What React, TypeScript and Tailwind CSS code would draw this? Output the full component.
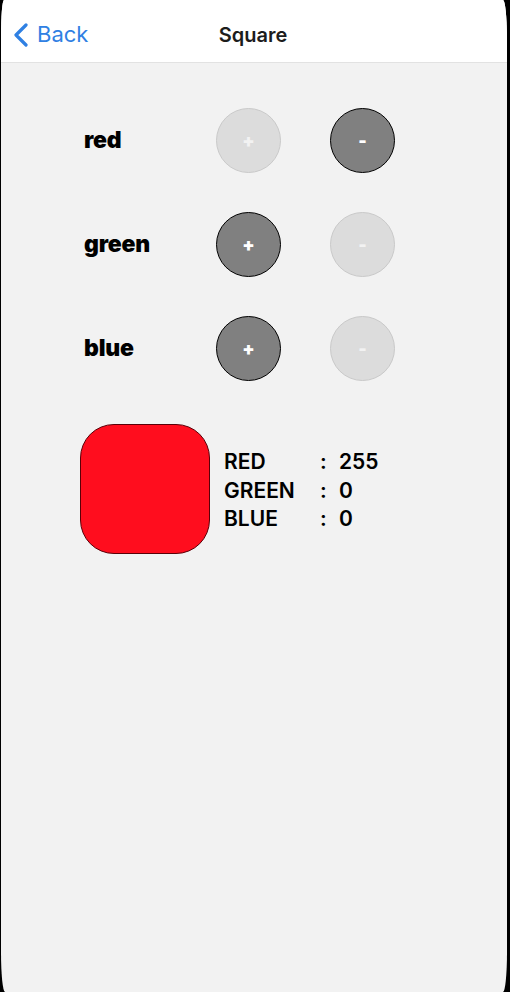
import React from "react";

function Btn({ label, enabled }: { label: string; enabled: boolean }) {
  return (
    <div
      className={
        enabled
          ? "w-[65px] h-[65px] rounded-full bg-[#808080] border-[1.5px] border-black flex items-center justify-center text-white font-black text-[18px]"
          : "w-[65px] h-[65px] rounded-full bg-[#dcdcdc] border border-[#c9c9c9] flex items-center justify-center text-[#f2f2f2] font-black text-[18px]"
      }
    >
      {label}
    </div>
  );
}

function Row({ name, plus, minus }: { name: string; plus: boolean; minus: boolean }) {
  return (
    <div className="flex items-center h-[65px]">
      <div className="w-[132px] pl-[83px] box-content text-[23px] font-black text-black tracking-[-0.2px]">{name}</div>
      <div>
        <Btn label="+" enabled={plus} />
      </div>
      <div className="ml-[49px]">
        <Btn label="-" enabled={minus} />
      </div>
    </div>
  );
}

export default function App() {
  return (
    <div className="w-[510px] h-[992px] bg-black pl-px pr-[3px]" style={{ fontFamily: "Inter, 'Noto Sans', sans-serif" }}>
      <div className="w-full h-full bg-[#f2f2f2] rounded-tl-[3px_36px] rounded-tr-[4px_40px] rounded-bl-[4px_40px] rounded-br-[4px_40px] overflow-hidden flex flex-col">
        <div className="h-[63px] bg-white border-b border-[#e2e2e2] flex items-center relative shrink-0 pt-[7px]">
          <div className="flex items-center pl-[11px] text-[#2f80e3] text-[22px]">
            <svg width="18" height="24" viewBox="0 0 18 24" className="mr-[7px]">
              <path d="M14 2 L4 12 L14 22" fill="none" stroke="#2f80e3" strokeWidth="3.2" strokeLinecap="round" strokeLinejoin="round" />
            </svg>
            <span>Back</span>
          </div>
          <div className="absolute left-0 right-0 text-center text-[20px] font-semibold text-[#1c1c1c] pointer-events-none pr-[2px]">Square</div>
        </div>
        <div className="flex flex-col gap-[39px] pt-[45px]">
          <Row name="red" plus={false} minus={true} />
          <Row name="green" plus={true} minus={false} />
          <Row name="blue" plus={true} minus={false} />
        </div>
        <div className="flex items-start pl-[79px] mt-[43px]">
          <div className="w-[130px] h-[130px] rounded-[34px] bg-[#ff0d1e] border border-[#5a0008]" />
          <div className="ml-[14px] mt-[24px] text-[21px] font-semibold text-black leading-[28.5px]">
            <div className="flex"><span className="w-[96px]">RED</span><span className="w-[19px]">:</span><span>255</span></div>
            <div className="flex"><span className="w-[96px]">GREEN</span><span className="w-[19px]">:</span><span>0</span></div>
            <div className="flex"><span className="w-[96px]">BLUE</span><span className="w-[19px]">:</span><span>0</span></div>
          </div>
        </div>
      </div>
    </div>
  );
}
